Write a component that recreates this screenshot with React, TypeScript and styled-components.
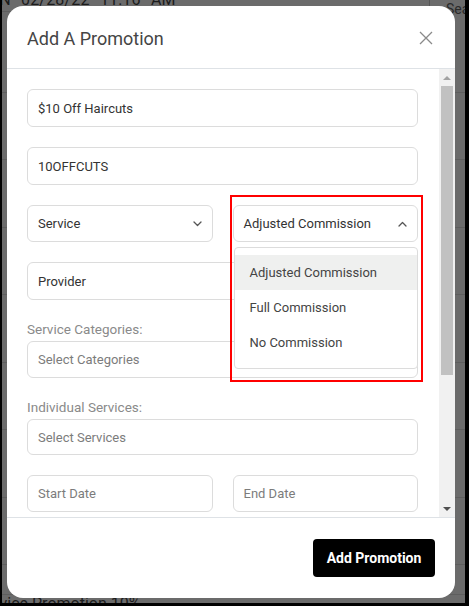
import React from "react";
import styled, { createGlobalStyle } from "styled-components";

const Global = createGlobalStyle`
  html, body {
    margin: 0;
    padding: 0;
    width: 469px;
    height: 606px;
    overflow: hidden;
    background: #000;
  }
  body {
    font-family: Roboto, "Noto Sans", Arial, sans-serif;
  }
  * { box-sizing: border-box; }
`;

const Stage = styled.div`
  position: relative;
  width: 463px;
  height: 603px;
  margin-left: 2px;
  background: #6b6b6b;
  overflow: hidden;
`;

const BgTop = styled.div`
  display: flex;
  justify-content: space-between;
  align-items: flex-start;
  height: 22px;
  margin-top: -10px;
  border-bottom: 1px solid #5e5e5e;
  font-size: 16px;
  color: #1c1c1c;
`;

const BgDate = styled.span`
  margin-left: -14px;
  letter-spacing: 0.2px;
  word-spacing: 6px;
  white-space: nowrap;
`;

const BgSearch = styled.div`
  width: 36px;
  height: 32px;
  margin-top: 2px;
  border-left: 1px solid #555;
  padding: 9px 0 0 16px;
  font-size: 14px;
  color: #2a2a2a;
  white-space: nowrap;
  overflow: hidden;
`;

const BgRow = styled.div<{ h: number }>`
  height: ${(p) => p.h}px;
  border-bottom: 1px solid #5e5e5e;
  font-size: 16px;
  color: #1c1c1c;
  overflow: hidden;
`;

const BgBottomText = styled.div`
  margin-left: -26px;
  font-size: 16px;
  line-height: 18px;
  color: #1c1c1c;
  white-space: nowrap;
`;

const Modal = styled.div`
  position: absolute;
  left: 5px;
  top: 6px;
  width: 448px;
  height: 592px;
  background: #fff;
  border-radius: 16px;
  overflow: hidden;
  display: flex;
  flex-direction: column;
`;

const Header = styled.div`
  height: 63px;
  flex: none;
  display: flex;
  align-items: center;
  justify-content: space-between;
  padding: 2px 22px 0 20px;
  border-bottom: 1px solid #dee2e6;
`;

const Title = styled.h2`
  margin: 0;
  font-size: 18px;
  font-weight: 400;
  color: #454545;
`;

const CloseButton = styled.button`
  border: 0;
  background: transparent;
  padding: 0;
  width: 15px;
  height: 15px;
  display: flex;
  align-items: center;
  justify-content: center;
  cursor: pointer;
`;

const Body = styled.div`
  height: 449px;
  flex: none;
  display: flex;
  border-bottom: 1px solid #dee2e6;
`;

const Content = styled.div`
  position: relative;
  flex: 1;
  overflow: hidden;
  padding: 20px 21px 0 20px;
  display: flex;
  flex-direction: column;
  gap: 20px;
`;

const Field = styled.div<{ h?: number; muted?: boolean }>`
  height: ${(p) => p.h ?? 38}px;
  flex: none;
  border: 1px solid #dcdcdc;
  border-radius: 6px;
  padding: 0 10px 0 10px;
  display: flex;
  align-items: center;
  justify-content: space-between;
  font-size: 13px;
  font-weight: 400;
  color: ${(p) => (p.muted ? "#7c7c7c" : "#333")};
  background: #fff;
`;

const Row = styled.div`
  display: grid;
  grid-template-columns: 1fr 1fr;
  gap: 20px;
`;

const SelectWrap = styled.div`
  position: relative;
  z-index: 2;
`;

const Group = styled.div`
  display: flex;
  flex-direction: column;
`;

const Label = styled.label`
  height: 21px;
  font-size: 13.5px;
  color: #8a8a8a;
  line-height: 18px;
`;

const Menu = styled.div`
  position: absolute;
  top: 42px;
  left: 1px;
  width: 184px;
  height: 122px;
  background: #fff;
  border: 1px solid #dcdcdc;
  border-radius: 4px;
  padding: 7px 0;
`;

const MenuItem = styled.div<{ active?: boolean }>`
  height: 35px;
  display: flex;
  align-items: center;
  padding-left: 15px;
  font-size: 13px;
  color: #444;
  background: ${(p) => (p.active ? "#eff0ef" : "transparent")};
`;

const Highlight = styled.div`
  position: absolute;
  left: -3px;
  top: -10px;
  width: 193px;
  height: 187px;
  border: 2px solid #ff0000;
  pointer-events: none;
`;

const ScrollBar = styled.div`
  width: 16px;
  flex: none;
  background: #f1f1f1;
  display: flex;
  flex-direction: column;
  align-items: center;
`;

const ScrollArrow = styled.div<{ down?: boolean; dark?: boolean }>`
  width: 16px;
  height: 17px;
  flex: none;
  display: flex;
  align-items: center;
  justify-content: center;
  &::after {
    content: "";
    width: 0;
    height: 0;
    border-left: 4px solid transparent;
    border-right: 4px solid transparent;
    ${(p) =>
      p.down
        ? `border-top: 4px solid ${p.dark ? "#505050" : "#a3a3a3"};`
        : `border-bottom: 4px solid ${p.dark ? "#505050" : "#a3a3a3"};`}
  }
`;

const Thumb = styled.div`
  width: 12px;
  height: 289px;
  background: #c1c1c1;
`;

const ScrollSpacer = styled.div`
  flex: 1;
`;

const Footer = styled.div`
  flex: 1;
  display: flex;
  align-items: center;
  justify-content: flex-end;
  padding: 0 20px 1px 0;
`;

const PrimaryButton = styled.button`
  width: 122px;
  height: 38px;
  border: 0;
  border-radius: 4px;
  background: #000;
  color: #fff;
  font-family: Roboto, Arial, sans-serif;
  font-size: 14px;
  font-weight: 700;
  cursor: pointer;
`;

const Chevron = ({ up }: { up?: boolean }) => (
  <svg width="9" height="6" viewBox="0 0 9 6" fill="none">
    <polyline
      points={up ? "1,5 4.5,1.5 8,5" : "1,1 4.5,4.5 8,1"}
      stroke="#555"
      strokeWidth="1.3"
      strokeLinecap="round"
      strokeLinejoin="round"
    />
  </svg>
);

const CloseIcon = () => (
  <svg width="14" height="14" viewBox="0 0 14 14">
    <path d="M1 1 L13 13 M13 1 L1 13" stroke="#8a8a8a" strokeWidth="1.3" />
  </svg>
);

export default function App() {
  return (
    <>
      <Global />
      <Stage>
        <BgTop>
          <BgDate>ON 02/28/22 11:16 AM</BgDate>
          <BgSearch>Search</BgSearch>
        </BgTop>
        <BgRow h={81} />
        <BgRow h={67} />
        <BgRow h={68} />
        <BgRow h={67} />
        <BgRow h={68} />
        <BgRow h={67} />
        <BgRow h={68} />
        <BgRow h={67} />
        <BgRow h={30} />
        <BgBottomText>Service Promotion 10%</BgBottomText>

        <Modal role="dialog" aria-label="Add A Promotion">
          <Header>
            <Title>Add A Promotion</Title>
            <CloseButton aria-label="Close">
              <CloseIcon />
            </CloseButton>
          </Header>
          <Body>
            <Content>
              <Field>$10 Off Haircuts</Field>
              <Field>10OFFCUTS</Field>
              <Row>
                <Field h={37}>
                  Service
                  <Chevron />
                </Field>
                <SelectWrap>
                  <Field h={37}>
                    Adjusted Commission
                    <Chevron up />
                  </Field>
                  <Menu>
                    <MenuItem active>Adjusted Commission</MenuItem>
                    <MenuItem>Full Commission</MenuItem>
                    <MenuItem>No Commission</MenuItem>
                  </Menu>
                  <Highlight />
                </SelectWrap>
              </Row>
              <Field>Provider</Field>
              <Group>
                <Label>Service Categories:</Label>
                <Field h={37} muted>
                  Select Categories
                </Field>
              </Group>
              <Group>
                <Label>Individual Services:</Label>
                <Field h={36} muted>
                  Select Services
                </Field>
              </Group>
              <Row>
                <Field h={37} muted>
                  Start Date
                </Field>
                <Field h={37} muted>
                  End Date
                </Field>
              </Row>
              <Field muted>Discount Amount</Field>
            </Content>
            <ScrollBar>
              <ScrollArrow />
              <Thumb />
              <ScrollSpacer />
              <ScrollArrow down dark />
            </ScrollBar>
          </Body>
          <Footer>
            <PrimaryButton>Add Promotion</PrimaryButton>
          </Footer>
        </Modal>
      </Stage>
    </>
  );
}
